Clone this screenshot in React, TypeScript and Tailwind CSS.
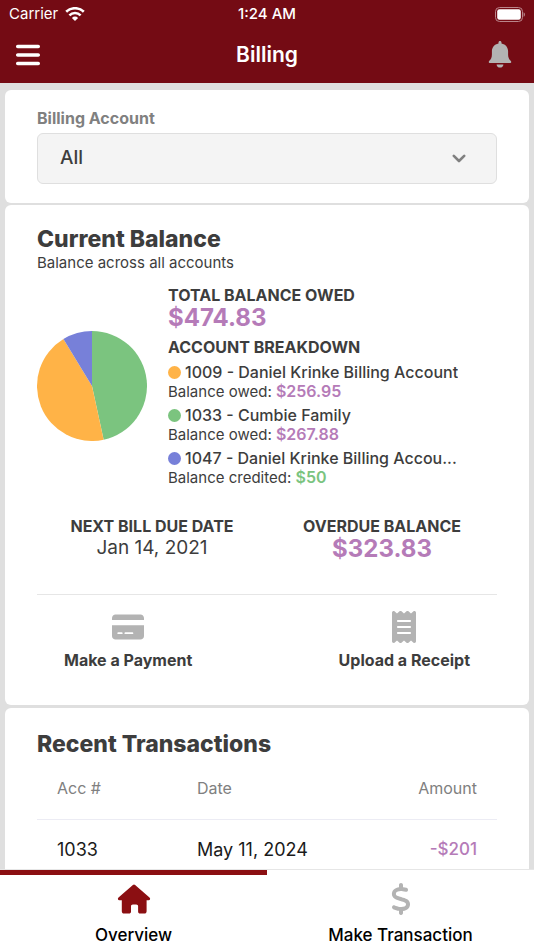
import React from "react";
import { FaBars, FaCreditCard, FaDollarSign, FaReceipt } from "react-icons/fa6";

const accounts = [
  { id: 1009, name: "Daniel Krinke Billing Account", label: "owed", amount: 256.95, dot: "bg-[#ffb347]", fill: "#ffb347" },
  { id: 1033, name: "Cumbie Family", label: "owed", amount: 267.88, dot: "bg-[#7bc47f]", fill: "#7bc47f" },
  { id: 1047, name: "Daniel Krinke Billing Accou...", label: "credited", amount: 50, dot: "bg-[#7780d9]", fill: "#7780d9" },
];

const transactions = [{ account: 1033, date: "May 11, 2024", amount: "-$201" }];

const BellIcon: React.FC = () => (
  <svg width="24" height="27" viewBox="0 0 24 27" fill="currentColor">
    <path d="M12 0c-.9 0-1.5.7-1.5 1.6v.8C6.3 3.2 3.9 6.400 3.900 10.3v3.2c0 2.800-.9 4.700-2.800 6.600-.7.8-.2 1.900.8 1.900h20.200c1 0 1.500-1.100.8-1.900-1.900-1.900-2.800-3.800-2.800-6.600v-3.200c0-3.900-2.400-7.100-6.600-7.900v-.8C13.500.7 12.900 0 12 0z" />
    <path d="M8.600 23.400h6.800c0 1.900-1.500 3.100-3.400 3.100s-3.400-1.200-3.400-3.100z" />
  </svg>
);

const HouseIcon: React.FC = () => (
  <svg width="34" height="32" viewBox="0 0 34 32" fill="#8b0f12">
    <path d="M15.900 1.900a1.700 1.700 0 0 1 2.200 0l14.400 12.700c1.200 1.100.7 2.700-.9 2.700h-2v10.900c0 1.400-.9 2.300-2.300 2.300h-4.100c-1.300 0-2.100-.8-2.100-2.100v-5.100c0-1.200-.7-1.900-1.900-1.900h-3.300c-1.200 0-1.900.7-1.900 1.900v5.100c0 1.300-.8 2.100-2.100 2.100H7.100c-1.400 0-2.300-.9-2.300-2.300V17.300H2.400c-1.600 0-2.100-1.600-.9-2.700z" />
  </svg>
);

const StatusBar: React.FC = () => (
  <div className="grid grid-cols-3 items-center h-7 px-[9px] text-[15px] leading-5">
    <div className="flex items-center gap-[7px]">
      <span>Carrier</span>
      <svg width="20" height="14" viewBox="0 0 20 14" fill="none" stroke="white">
        <path d="M1.2 4.8a12.6 12.6 0 0 1 17.6 0" strokeWidth="2.6" />
        <path d="M4.4 8.3a8 8 0 0 1 11.2 0" strokeWidth="2.5" />
        <path d="M10 14 6.9 10.9a4.4 4.4 0 0 1 6.2 0z" fill="white" stroke="none" />
      </svg>
    </div>
    <span className="text-center font-medium">1:24 AM</span>
    <svg className="justify-self-end" width="30" height="15" viewBox="0 0 30 15">
      <rect x="0.5" y="0.5" width="27" height="14" rx="4" fill="none" stroke="#ba858a" />
      <rect x="2.2" y="2.2" width="23.6" height="10.6" rx="2.2" fill="white" />
      <path d="M28.6 5.2c1.8.8 1.8 3.8 0 4.6z" fill="#ba858a" />
    </svg>
  </div>
);

const PieChart: React.FC = () => {
  const total = accounts.reduce((sum, a) => sum + a.amount, 0);
  const point = (t: number) =>
    `${55 + 55 * Math.sin(2 * Math.PI * t)} ${55 - 55 * Math.cos(2 * Math.PI * t)}`;
  let start = 0;

  return (
    <svg width="110" height="110" viewBox="0 0 110 110" className="shrink-0">
      {[accounts[1], accounts[0], accounts[2]].map((a) => {
        const end = start + a.amount / total;
        const d = `M55 55L${point(start)}A55 55 0 0 1 ${point(end)}Z`;
        start = end;
        return <path key={a.id} d={d} fill={a.fill} />;
      })}
    </svg>
  );
};

export default function App() {
  return (
    <div className="flex flex-col h-screen bg-[#dfdfdf] text-[#3d3d3d] font-['Inter',sans-serif]">
      <header className="shrink-0 bg-[#740b14] text-white pb-[2px]">
        <StatusBar />
        <div className="grid grid-cols-3 items-center h-[53px] px-4">
          <button aria-label="Menu" className="justify-self-start">
            <FaBars className="w-6 h-7" />
          </button>
          <h1 className="text-center text-[21px] leading-7 font-semibold">Billing</h1>
          <button aria-label="Notifications" className="justify-self-end pr-[6px] text-[#b3b3b3]">
            <BellIcon />
          </button>
        </div>
      </header>

      <main className="flex-1 min-h-0 overflow-hidden px-[5px] pt-[7px]">
        <section className="bg-white rounded-md px-8 pt-[18px] pb-[19px]">
          <label htmlFor="account" className="block text-base leading-5 font-bold text-[#808080]">
            Billing Account
          </label>
          <div className="relative mt-[5px]">
            <select
              id="account"
              className="block w-full h-[51px] appearance-none rounded-md border border-[#dfdfdf] bg-[#f4f4f4] px-[22px] text-[19px] font-medium"
            >
              <option>All</option>
              {accounts.map((a) => (
                <option key={a.id}>{a.id}</option>
              ))}
            </select>
            <svg
              className="absolute right-[31px] top-[21px] pointer-events-none"
              width="14"
              height="9"
              viewBox="0 0 14 9"
              fill="none"
              stroke="#808080"
              strokeWidth="2.6"
              strokeLinecap="round"
              strokeLinejoin="round"
            >
              <path d="M1.8 1.8 7 7l5.2-5.2" />
            </svg>
          </div>
        </section>

        <section className="mt-[2px] bg-white rounded-md px-8 pt-5 pb-[35px]">
          <h2 className="text-[23px] leading-7 font-extrabold">Current Balance</h2>
          <p className="text-[15px] leading-5">Balance across all accounts</p>

          <div className="flex items-center gap-[21px] mt-3">
            <PieChart />
            <div className="min-w-0">
              <h3 className="text-base leading-5 font-bold">TOTAL BALANCE OWED</h3>
              <p className="text-2xl leading-[26px] font-bold text-[#b57bb8]">$474.83</p>
              <h3 className="mt-1 text-base leading-6 font-bold">ACCOUNT BREAKDOWN</h3>
              <ul className="mt-1 flex flex-col gap-[5px]">
                {accounts.map((a) => (
                  <li key={a.id} className="text-[15px] leading-[19px]">
                    <div className="flex items-center gap-1 text-base leading-[19px] font-medium">
                      <span className={`size-[13px] shrink-0 rounded-full ${a.dot}`} />
                      <span className="truncate">
                        {a.id} - {a.name}
                      </span>
                    </div>
                    <p>
                      Balance {a.label}:{" "}
                      <span
                        className={
                          a.label === "owed"
                            ? "text-base leading-[19px] font-semibold text-[#b57bb8]"
                            : "text-base leading-[19px] font-semibold text-[#7bc47f]"
                        }
                      >
                        ${a.amount}
                      </span>
                    </p>
                  </li>
                ))}
              </ul>
            </div>
          </div>

          <div className="grid grid-cols-2 mt-[29px] pb-8 text-center border-b border-[#e6e6e6]">
            <div>
              <h3 className="text-base leading-5 font-bold">NEXT BILL DUE DATE</h3>
              <p className="text-[19px] leading-6">Jan 14, 2021</p>
            </div>
            <div>
              <h3 className="text-base leading-5 font-bold">OVERDUE BALANCE</h3>
              <p className="text-2xl leading-[26px] font-bold text-[#b57bb8]">$323.83</p>
            </div>
          </div>

          <div className="flex justify-between mt-4 px-[27px] text-base leading-5 font-bold">
            <button className="flex flex-col items-center gap-[7px]">
              <FaCreditCard className="w-8 h-8 text-[#b3b3b3]" />
              Make a Payment
            </button>
            <button className="flex flex-col items-center gap-[7px]">
              <FaReceipt className="w-8 h-8 text-[#b3b3b3]" />
              Upload a Receipt
            </button>
          </div>
        </section>

        <section className="mt-[3px] bg-white rounded-md px-8 pt-[22px] pb-5">
          <h2 className="text-[23px] leading-7 font-extrabold">Recent Transactions</h2>
          <table className="w-full">
            <thead className="text-base text-[#808080]">
              <tr className="h-[61px] border-b border-[#ececf4]">
                <th className="w-40 pl-5 text-left font-normal">Acc #</th>
                <th className="text-left font-normal">Date</th>
                <th className="pr-5 text-right font-normal">Amount</th>
              </tr>
            </thead>
            <tbody className="text-lg text-[#1a1a1a]">
              {transactions.map((t) => (
                <tr key={t.date} className="h-[61px] border-b border-[#ececf4]">
                  <td className="pl-5">{t.account}</td>
                  <td>{t.date}</td>
                  <td className="pr-5 text-right text-[17px] font-medium text-[#b57bb8]">{t.amount}</td>
                </tr>
              ))}
            </tbody>
          </table>
        </section>
      </main>

      <nav className="grid grid-cols-2 shrink-0 h-[81px] bg-white border-t border-[#e6e6e6] text-[17px] leading-5 font-medium text-black">
        <button className="flex flex-col items-center border-t-5 border-[#8b0f12] pt-2 gap-[10px]">
          <HouseIcon />
          Overview
        </button>
        <button className="flex flex-col items-center border-t-5 border-transparent pt-2 gap-[10px]">
          <FaDollarSign className="w-8 h-8 text-[#b3b3b3]" />
          Make Transaction
        </button>
      </nav>
    </div>
  );
}
